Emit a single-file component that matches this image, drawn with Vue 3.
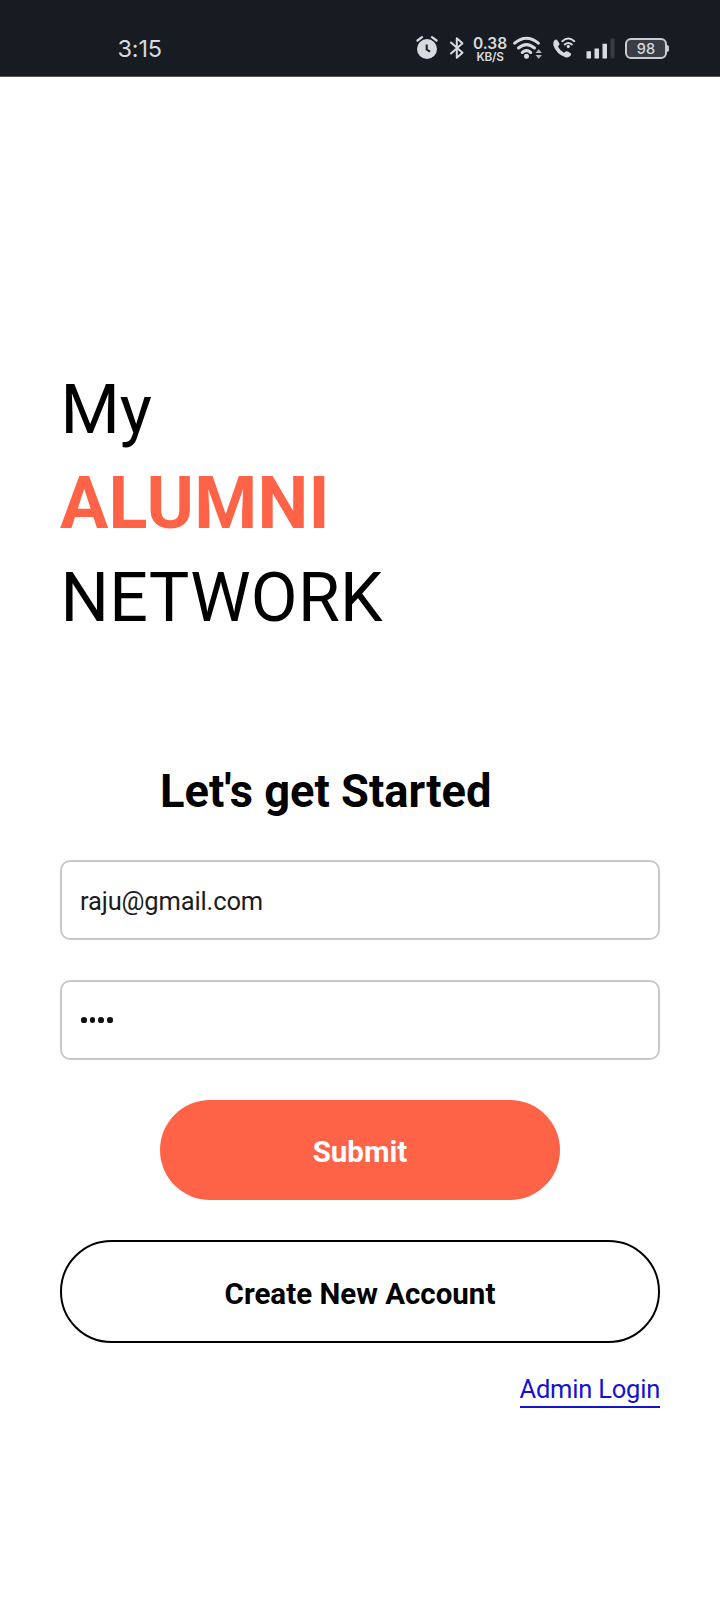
<script setup>
import { ref } from 'vue'

const email = ref('raju@gmail.com')
const pinLength = 4
</script>

<template>
  <div class="screen">
    <header class="status">
      <span class="time">3:15</span>
      <div class="icons">
        <svg class="alarm" width="22" height="24" viewBox="0 0 22 24">
          <circle cx="11" cy="13" r="10" fill="#d8dade" />
          <path d="M1.5 4.5 L6 1.2 M20.5 4.5 L16 1.2" stroke="#d8dade" stroke-width="2.2" stroke-linecap="round" fill="none" />
          <path d="M10.7 8.5 V13.5 L14 15.7" stroke="#191c23" stroke-width="2" fill="none" />
        </svg>
        <svg class="bluetooth" width="16" height="24" viewBox="0 0 16 24">
          <path d="M2 6.5 L13.5 16.8 L7.8 21.8 V2.2 L13.5 7.2 L2 17.5" stroke="#d8dade" stroke-width="2" stroke-linejoin="round" stroke-linecap="round" fill="none" />
        </svg>
        <div class="speed"><b>0.38</b><span>KB/S</span></div>
        <svg class="wifi" width="30" height="24" viewBox="0 0 30 24">
          <g fill="none" stroke="#d8dade" stroke-width="3" stroke-linecap="round">
            <path d="M1.7 7.2 Q13.5 -2.8 25.3 7.2" />
            <path d="M5.5 12 Q13.5 5.2 21.5 12" />
            <path d="M9.3 16.5 Q13.5 12.8 17.7 16.5" />
          </g>
          <circle cx="13.5" cy="20.2" r="2.5" fill="#d8dade" />
          <path d="M22.5 17 L25.7 13.3 L28.9 17Z M22.5 19 L25.7 22.7 L28.9 19Z" fill="#b5b8bd" />
        </svg>
        <svg class="call" width="24" height="22" viewBox="0 0 24 22">
          <path d="M2.5 3.2 Q4.2 1.8 5.5 3.4 L7.3 6.2 Q8 7.6 6.6 8.8 L5.9 9.5 Q8 13.8 12 15.7 L13.3 14.8 Q14.4 13.9 15.8 14.6 L18.3 16.1 Q19.8 17.1 18.7 18.5 Q16.4 21 13.4 20.2 Q4.6 17.3 1.3 8.2 Q.5 5 2.5 3.2Z" fill="#d8dade" />
          <g fill="none" stroke="#d8dade" stroke-width="1.9" stroke-linecap="round">
            <path d="M10.3 4.2 Q16.3 -1 22.3 4.2" />
            <path d="M12.7 7.5 Q16.3 4.3 19.9 7.5" />
          </g>
          <circle cx="16.3" cy="9.4" r="1.6" fill="#d8dade" />
        </svg>
        <svg class="signal" width="29" height="21" viewBox="0 0 29 21">
          <path d="M.5 13.3h4.5v7.2H.5z M8.5 10.5h4.5v10H8.5z M16.5 5.7h4.5v14.8h-4.5z" fill="#d8dade" />
          <path d="M24.5 .5h4v20h-4z" fill="#383b43" />
        </svg>
        <div class="battery">98</div>
        <i class="cap"></i>
      </div>
    </header>

    <main class="content">
      <h1 class="title">
        <span class="my">My</span>
        <span class="alumni">ALUMNI</span>
        <span class="network">NETWORK</span>
      </h1>
      <h2 class="subtitle">Let's get Started</h2>
      <div class="field">{{ email }}</div>
      <div class="field pin">
        <i v-for="n in pinLength" :key="n" class="dot"></i>
      </div>
      <button class="submit">Submit</button>
      <button class="create">Create New Account</button>
      <a class="admin">Admin Login</a>
    </main>
  </div>
</template>

<style>
body {
  background: #fff;
}
</style>

<style scoped>
.screen {
  width: 720px;
  height: 1600px;
  background: #fff;
  color: #000;
  font-family: Roboto, sans-serif;
  overflow: hidden;
}
.status {
  box-sizing: border-box;
  height: 77px;
  padding: 22px 51px 0 117.5px;
  display: flex;
  justify-content: space-between;
  background: #171b22;
  border-bottom: 1px solid #54565a;
  color: #d8dade;
}
.time {
  font: 23.5px/54px Inter, sans-serif;
  letter-spacing: -0.2px;
}
.icons {
  display: flex;
  align-items: flex-start;
  padding-top: 14px;
}
.alarm {
  margin-right: 11px;
}
.bluetooth {
  margin-right: 8px;
}
.speed {
  width: 34px;
  margin-right: 6px;
  display: flex;
  flex-direction: column;
  align-items: center;
}
.speed b {
  font: 600 15.5px/15px Inter, sans-serif;
}
.speed span {
  font: 600 11.8px/12px Inter, sans-serif;
  letter-spacing: -0.3px;
}
.wifi {
  margin-right: 9px;
}
.call {
  margin-right: 10px;
  margin-top: 1px;
}
.signal {
  margin-right: 10px;
  margin-top: 2px;
}
.battery {
  box-sizing: border-box;
  width: 42px;
  height: 21px;
  margin-top: 2px;
  border: 2px solid #c9ccd0;
  border-radius: 6px;
  background: #3b3e45;
  font: 500 14.5px/17px Inter, sans-serif;
  text-align: center;
}
.cap {
  width: 2px;
  height: 7px;
  margin-top: 9px;
  border-radius: 0 2px 2px 0;
  background: #c9ccd0;
}
.content {
  padding: 287px 60px 0;
  display: flex;
  flex-direction: column;
}
.title {
  margin: 0;
  display: flex;
  flex-direction: column;
  font-weight: 400;
  font-size: 68px;
}
.my {
  padding-left: 0.4px;
  line-height: 93px;
}
.alumni {
  font-size: 72px;
  font-weight: 700;
  line-height: 94px;
  letter-spacing: 0.2px;
  color: #ff6347;
}
.network {
  padding-left: 0.4px;
  line-height: 94px;
  letter-spacing: 0.3px;
}
.subtitle {
  margin: 116px 0 0 100px;
  font-size: 45.3px;
  font-weight: 700;
  line-height: 62px;
}
.field {
  box-sizing: border-box;
  height: 80px;
  margin-top: 37px;
  padding: 1px 18px 0;
  border: 2px solid #c8c8c8;
  border-radius: 10px;
  display: flex;
  align-items: center;
  font-size: 25.5px;
  letter-spacing: -0.14px;
  color: #1c1c1c;
}
.pin {
  margin-top: 40px;
  padding: 0 19px;
  gap: 3px;
}
.dot {
  width: 5.7px;
  height: 5.7px;
  border-radius: 50%;
  background: #111;
}
.submit,
.create {
  font: 700 29.5px/38px Roboto, sans-serif;
  border-radius: 52px;
}
.submit {
  width: 400px;
  height: 100px;
  margin: 40px auto 0;
  padding: 4px 0 0;
  border: 0;
  background: #ff6347;
  color: #fff;
}
.create {
  height: 103px;
  margin: 40px 0 0;
  padding: 4px 0 0;
  border: 2px solid #000;
  background: #fff;
  color: #000;
}
.admin {
  align-self: flex-end;
  margin-top: 30px;
  border-bottom: 2px solid #1512cf;
  font-size: 25.5px;
  line-height: 33px;
  letter-spacing: -0.22px;
  color: #1512cf;
}
</style>
